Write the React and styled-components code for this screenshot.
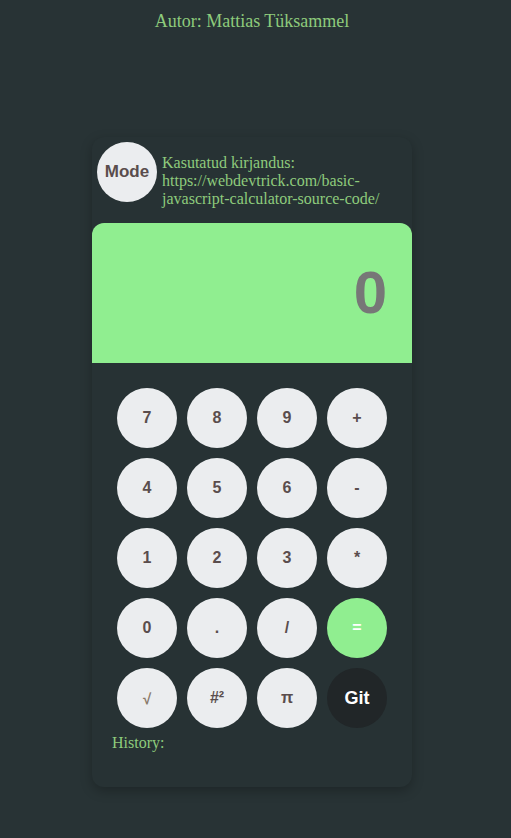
import styled, { createGlobalStyle } from 'styled-components'

const GlobalStyle = createGlobalStyle`
  html, body {
    margin: 0;
    background: #283335;
  }
  body {
    font-family: "Liberation Serif", "Times New Roman", serif;
    color: #8ecb7c;
  }
`

const Page = styled.div`
  width: 504px;
  min-height: 838px;
  display: flex;
  flex-direction: column;
  align-items: center;
`

const Author = styled.h1`
  margin: 11px 0 0;
  font-size: 18px;
  font-weight: normal;
  line-height: 20px;
  color: #8ecb7c;
`

const Calculator = styled.div`
  margin-top: 106px;
  width: 320px;
  background: #273234;
  border-radius: 12px;
  box-shadow: 0 4px 12px rgba(0, 0, 0, 0.25);
  padding-bottom: 35px;
  overflow: hidden;
`

const Header = styled.div`
  display: flex;
  align-items: flex-start;
  gap: 5px;
  padding: 5px 5px 0;
  height: 81px;
`

const Circle = styled.button`
  width: 60px;
  height: 60px;
  flex-shrink: 0;
  border: none;
  border-radius: 50%;
  padding: 0;
  font-family: "Liberation Sans", Arial, sans-serif;
  font-weight: bold;
  font-size: ${(p) => p.$size || 16}px;
  background: ${(p) => p.$bg || '#ebedef'};
  color: ${(p) => p.$color || '#5a4d4d'};
  cursor: pointer;
  display: flex;
  align-items: center;
  justify-content: center;
`

const Credits = styled.p`
  margin: 12px 0 0;
  font-size: 16px;
  line-height: 18px;
  color: #8ecb7c;
`

const Display = styled.div`
  box-sizing: border-box;
  height: 140px;
  background: #90ee90;
  border-radius: 12px 12px 0 0;
  display: flex;
  align-items: center;
  justify-content: flex-end;
  padding: 0 25px 2px 0;
  font-family: "Liberation Sans", Arial, sans-serif;
  font-weight: bold;
  font-size: 60px;
  color: #777777;
`

const Keys = styled.div`
  display: grid;
  grid-template-columns: repeat(4, 60px);
  gap: 10px;
  padding: 25px 25px 0;
`

const History = styled.div`
  margin: 6px 0 0 20px;
  font-size: 16px;
  line-height: 18px;
  color: #8ecb7c;
`

const keys = [
  '7', '8', '9', '+',
  '4', '5', '6', '-',
  '1', '2', '3', '*',
  '0', '.', '/', '=',
  '√', '#²', 'π', 'Git',
]

const keyStyle = (k) => {
  if (k === '=') return { $bg: '#90ee90', $color: '#ffffff' }
  if (k === 'Git') return { $bg: '#212628', $color: '#ffffff', $size: 18 }
  if (k === '√') return { $color: '#8a7a6a', $size: 15 }
  return {}
}

export default function App() {
  return (
    <>
      <GlobalStyle />
      <Page>
        <Author>Autor: Mattias Tüksammel</Author>
        <Calculator>
          <Header>
            <Circle $size={17}>Mode</Circle>
            <Credits>
              Kasutatud kirjandus:
              <br />
              https://webdevtrick.com/basic-
              <br />
              javascript-calculator-source-code/
            </Credits>
          </Header>
          <Display>0</Display>
          <Keys>
            {keys.map((k) => (
              <Circle key={k} {...keyStyle(k)}>
                {k}
              </Circle>
            ))}
          </Keys>
          <History>History:</History>
        </Calculator>
      </Page>
    </>
  )
}
